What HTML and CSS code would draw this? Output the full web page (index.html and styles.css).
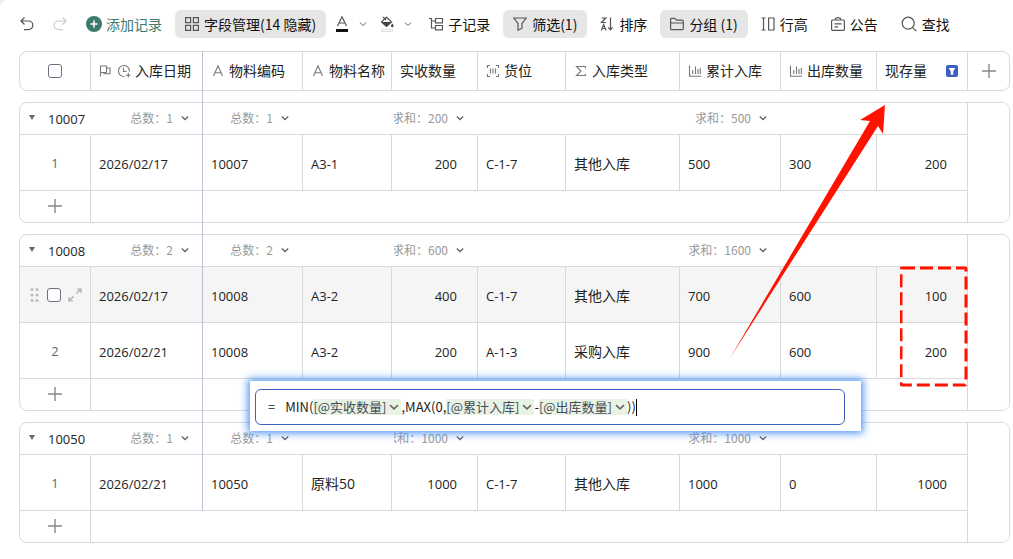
FILE: index.html
```
<!DOCTYPE html>
<html lang="zh-CN">
<head>
    <meta charset="UTF-8">
    <meta name="viewport" content="width=device-width, initial-scale=1.0">
    <title>库存现存量</title>
    <link rel="stylesheet" href="styles.css">
</head>
<body>

    <!-- Icônes partagées -->
    <svg class="sprite" aria-hidden="true">
        <symbol id="i-undo" viewBox="0 0 16 16"><path d="M5.5 1.5 2 5l3.500 3.500M2 5h7.500a4.300 4.300 0 0 1 0 8.600H5"/></symbol>
        <symbol id="i-redo" viewBox="0 0 16 16"><path d="M10.500 1.500 14 5l-3.500 3.500M14 5H6.500a4.300 4.300 0 0 0 0 8.600H11"/></symbol>
        <symbol id="i-grid" viewBox="0 0 14 14"><path d="M.6.6h5v5h-5zM8.400.6h5v5h-5zM.6 8.400h5v5h-5zM8.400 8.400h5v5h-5z"/></symbol>
        <symbol id="i-color" viewBox="0 0 14 16"><path d="M2.500 10 7 .8 11.500 10M4 7h6"/><path class="solid" d="M1 13h12v3H1z"/></symbol>
        <symbol id="i-fill" viewBox="0 0 14 16"><path d="m3 1 3 3M6.500 1.200 11.500 6 6.500 10.500 1.500 6z"/><path class="solid-grey" d="M1.500 6h10l-5 4.800zM12.300 7.500c.8 1.200 1.300 1.800 1.300 2.500a1.300 1.300 0 0 1-2.600 0c0-.7.5-1.300 1.300-2.500z"/><path class="faint" d="M1.500 13.500h11v2h-11z"/></symbol>
        <symbol id="i-down" viewBox="0 0 8 8"><path d="m.8 2.500 3.200 3 3.200-3"/></symbol>
        <symbol id="i-tree" viewBox="0 0 14 14"><path d="M0 1.500h2.500v9.500H6M2.500 4H6M6.500 1.500h7v4.300h-7zM6.500 8.500h7v4.300h-7z"/></symbol>
        <symbol id="i-funnel" viewBox="0 0 14 14"><path d="M.8 1h12.400L9 6.500v4.700l-4 2V6.500z"/></symbol>
        <symbol id="i-sort" viewBox="0 0 14 14"><path d="M1.500 1h4.300L1.500 5.500h4.500M1.300 13.500l2.400-6 2.400 6M2.200 11.500h3M10.500.5v12M8.300 10.300l2.200 2.500 2-2.500"/></symbol>
        <symbol id="i-folder" viewBox="0 0 14 14"><path d="M.6 2.400c0-.7.400-1.100 1.100-1.100h3l1.700 1.800h5.800c.7 0 1.100.4 1.100 1.100v7.300c0 .7-.4 1.100-1.100 1.100H1.700c-.7 0-1.100-.4-1.100-1.100zM.6 6h12.700"/></symbol>
        <symbol id="i-height" viewBox="0 0 14 14"><path d="M.5 1h4M2.500 1v12M.5 13h4M7.600 1h5.400v12H7.600z"/></symbol>
        <symbol id="i-notice" viewBox="0 0 14 14"><path d="M1.600 3h10.800c.6 0 1 .4 1 1v8.300c0 .6-.4 1-1 1H1.600c-.6 0-1-.4-1-1V4c0-.6.4-1 1-1zM4.500 3V1.500L7 .5l2.500 1V3M3.500 6.800h7M3.500 9.800H7"/></symbol>
        <symbol id="i-search" viewBox="0 0 16 16"><circle cx="7.200" cy="7.200" r="6"/><path d="m11.700 11.700 3.500 3.500"/></symbol>
        <symbol id="i-flag" viewBox="0 0 14 14"><path d="M1.500 12.500V2h6v6.500h-6M7.500 4H11v5.800H5V8.500"/></symbol>
        <symbol id="i-clock" viewBox="0 0 14 14"><path d="M12.400 7.500A5.500 5.500 0 1 0 7.500 12.400M6.500 3.500v4H9.500M11.300 8.800v4.800M8.900 11.200h4.800"/></symbol>
        <symbol id="i-text" viewBox="0 0 14 14"><path d="M2.500 12 7 1.800 11.500 12M4 8.700h6"/></symbol>
        <symbol id="i-scan" viewBox="0 0 14 14"><path d="M4 1.500H1.500V4M10 1.500h2.500V4M4 12.500H1.500V10M10 12.500h2.500V10M4.500 4.500v5M7 4.500v5M9.500 4.500v5"/></symbol>
        <symbol id="i-sum" viewBox="0 0 14 14"><path d="M11.500 4.300V2.500h-9L7 7l-4.500 4.500h9V9.700"/></symbol>
        <symbol id="i-chart" viewBox="0 0 14 14"><path d="M1.500 1.500v10.700h11.700M4.700 6v4M7.500 2.500V10M10 5v5M12.300 4v6"/></symbol>
        <symbol id="i-plus" viewBox="0 0 14 14"><path d="M7 0v14M0 7h14"/></symbol>
        <symbol id="i-expand" viewBox="0 0 14 14"><path d="M9 1h4v4M13 1 8.500 5.500M5 13H1V9M1 13l4.500-4.500"/></symbol>
    </svg>

    <main class="page">
        <div class="toolbar">
            <button class="tool tool-undo" type="button" aria-label="撤销"><svg class="icon icon-lg"><use href="#i-undo"/></svg></button>
            <button class="tool tool-redo" type="button" aria-label="重做" disabled><svg class="icon icon-lg"><use href="#i-redo"/></svg></button>
            <button class="tool tool-add" type="button">
                <svg class="add-icon" viewBox="0 0 16 16"><circle cx="8" cy="8" r="8"/><path d="M8 4.500v7M4.500 8h7"/></svg>添加记录
            </button>
            <button class="tool tool-on" type="button"><svg class="icon"><use href="#i-grid"/></svg>字段管理(14 隐藏)</button>
            <button class="tool tool-color" type="button" aria-label="文字颜色"><svg class="icon icon-tall"><use href="#i-color"/></svg><svg class="chevron"><use href="#i-down"/></svg></button>
            <button class="tool tool-color" type="button" aria-label="填充颜色"><svg class="icon icon-tall"><use href="#i-fill"/></svg><svg class="chevron"><use href="#i-down"/></svg></button>
            <button class="tool" type="button"><svg class="icon"><use href="#i-tree"/></svg>子记录</button>
            <button class="tool tool-on" type="button"><svg class="icon"><use href="#i-funnel"/></svg>筛选(1)</button>
            <button class="tool" type="button"><svg class="icon"><use href="#i-sort"/></svg>排序</button>
            <button class="tool tool-on" type="button"><svg class="icon"><use href="#i-folder"/></svg>分组 (1)</button>
            <button class="tool" type="button"><svg class="icon"><use href="#i-height"/></svg>行高</button>
            <button class="tool" type="button"><svg class="icon"><use href="#i-notice"/></svg>公告</button>
            <button class="tool" type="button"><svg class="icon icon-lg"><use href="#i-search"/></svg>查找</button>
        </div>

        <div class="board">
            <div class="card">
                <table class="grid">
                    <colgroup><col class="c-no"><col class="c-date"><col class="c-code"><col class="c-name"><col class="c-qty"><col class="c-loc"><col class="c-type"><col class="c-in"><col class="c-out"><col class="c-stock"><col></colgroup>
                    <thead>
                        <tr class="head">
                            <th class="no"><input class="check" type="checkbox" aria-label="全选"></th>
                            <th><span class="label"><svg class="icon"><use href="#i-flag"/></svg><svg class="icon"><use href="#i-clock"/></svg>入库日期</span></th>
                            <th><span class="label"><svg class="icon"><use href="#i-text"/></svg>物料编码</span></th>
                            <th><span class="label"><svg class="icon"><use href="#i-text"/></svg>物料名称</span></th>
                            <th><span class="label">实收数量</span></th>
                            <th><span class="label"><svg class="icon"><use href="#i-scan"/></svg>货位</span></th>
                            <th><span class="label"><svg class="icon"><use href="#i-sum"/></svg>入库类型</span></th>
                            <th><span class="label"><svg class="icon"><use href="#i-chart"/></svg>累计入库</span></th>
                            <th><span class="label"><svg class="icon"><use href="#i-chart"/></svg>出库数量</span></th>
                            <th><span class="label">现存量<button class="filter-on" type="button" aria-label="筛选"><svg viewBox="0 0 12 12"><path d="M2.500 3h7L7.300 6v3.800H4.700V6z"/></svg></button></span></th>
                            <th class="add-col"><button class="plus" type="button" aria-label="添加字段"><svg class="icon"><use href="#i-plus"/></svg></button></th>
                        </tr>
                    </thead>
                </table>
            </div>

            <div class="card">
                <table class="grid">
                    <colgroup><col class="c-no"><col class="c-date"><col class="c-code"><col class="c-name"><col class="c-qty"><col class="c-loc"><col class="c-type"><col class="c-in"><col class="c-out"><col class="c-stock"><col></colgroup>
                    <tbody>
                        <tr class="group">
                            <th colspan="2"><div class="group-title"><button class="toggle" type="button" aria-label="折叠"></button><span class="group-name">10007</span><button class="total" type="button">总数：1<svg class="chevron"><use href="#i-down"/></svg></button></div></th>
                            <td><button class="total" type="button">总数：1<svg class="chevron"><use href="#i-down"/></svg></button></td>
                            <td></td>
                            <td><button class="total" type="button">求和：200<svg class="chevron"><use href="#i-down"/></svg></button></td>
                            <td></td><td></td>
                            <td><button class="total" type="button">求和：500<svg class="chevron"><use href="#i-down"/></svg></button></td>
                            <td></td><td class="edge"></td><td class="rest"></td>
                        </tr>
                        <tr class="row">
                            <td class="no">1</td><td>2026/02/17</td><td>10007</td><td>A3-1</td><td class="num">200</td><td>C-1-7</td><td class="zh">其他入库</td><td>500</td><td>300</td><td class="num">200</td><td class="rest"></td>
                        </tr>
                        <tr class="add-row">
                            <td class="no"><button class="plus" type="button" aria-label="添加记录"><svg class="icon"><use href="#i-plus"/></svg></button></td><td colspan="9"></td><td class="rest"></td>
                        </tr>
                    </tbody>
                </table>
            </div>

            <div class="card">
                <table class="grid">
                    <colgroup><col class="c-no"><col class="c-date"><col class="c-code"><col class="c-name"><col class="c-qty"><col class="c-loc"><col class="c-type"><col class="c-in"><col class="c-out"><col class="c-stock"><col></colgroup>
                    <tbody>
                        <tr class="group">
                            <th colspan="2"><div class="group-title"><button class="toggle" type="button" aria-label="折叠"></button><span class="group-name">10008</span><button class="total" type="button">总数：2<svg class="chevron"><use href="#i-down"/></svg></button></div></th>
                            <td><button class="total" type="button">总数：2<svg class="chevron"><use href="#i-down"/></svg></button></td>
                            <td></td>
                            <td><button class="total" type="button">求和：600<svg class="chevron"><use href="#i-down"/></svg></button></td>
                            <td></td><td></td>
                            <td><button class="total" type="button">求和：1600<svg class="chevron"><use href="#i-down"/></svg></button></td>
                            <td></td><td class="edge"></td><td class="rest"></td>
                        </tr>
                        <tr class="row row-hover">
                            <td class="no">
                                <div class="handles">
                                    <svg class="drag" viewBox="0 0 10 14"><circle cx="2" cy="1.500" r="1.500"/><circle cx="7" cy="1.500" r="1.500"/><circle cx="2" cy="7" r="1.500"/><circle cx="7" cy="7" r="1.500"/><circle cx="2" cy="12.500" r="1.500"/><circle cx="7" cy="12.500" r="1.500"/></svg>
                                    <input class="check" type="checkbox" aria-label="选择记录">
                                    <button class="expand" type="button" aria-label="展开记录"><svg class="icon"><use href="#i-expand"/></svg></button>
                                </div>
                            </td>
                            <td>2026/02/17</td><td>10008</td><td>A3-2</td><td class="num">400</td><td>C-1-7</td><td class="zh">其他入库</td><td>700</td><td>600</td><td class="num">100</td><td class="rest"></td>
                        </tr>
                        <tr class="row">
                            <td class="no">2</td><td>2026/02/21</td><td>10008</td><td>A3-2</td><td class="num">200</td><td>A-1-3</td><td class="zh">采购入库</td><td>900</td><td>600</td><td class="num">200</td><td class="rest"></td>
                        </tr>
                        <tr class="add-row">
                            <td class="no"><button class="plus" type="button" aria-label="添加记录"><svg class="icon"><use href="#i-plus"/></svg></button></td><td colspan="9"></td><td class="rest"></td>
                        </tr>
                    </tbody>
                </table>
            </div>

            <div class="card">
                <table class="grid">
                    <colgroup><col class="c-no"><col class="c-date"><col class="c-code"><col class="c-name"><col class="c-qty"><col class="c-loc"><col class="c-type"><col class="c-in"><col class="c-out"><col class="c-stock"><col></colgroup>
                    <tbody>
                        <tr class="group">
                            <th colspan="2"><div class="group-title"><button class="toggle" type="button" aria-label="折叠"></button><span class="group-name">10050</span><button class="total" type="button">总数：1<svg class="chevron"><use href="#i-down"/></svg></button></div></th>
                            <td><button class="total" type="button">总数：1<svg class="chevron"><use href="#i-down"/></svg></button></td>
                            <td></td>
                            <td><button class="total" type="button">求和：1000<svg class="chevron"><use href="#i-down"/></svg></button></td>
                            <td></td><td></td>
                            <td><button class="total" type="button">求和：1000<svg class="chevron"><use href="#i-down"/></svg></button></td>
                            <td></td><td class="edge"></td><td class="rest"></td>
                        </tr>
                        <tr class="row">
                            <td class="no">1</td><td>2026/02/21</td><td>10050</td><td class="zh">原料50</td><td class="num">1000</td><td>C-1-7</td><td class="zh">其他入库</td><td>1000</td><td>0</td><td class="num">1000</td><td class="rest"></td>
                        </tr>
                        <tr class="add-row">
                            <td class="no"><button class="plus" type="button" aria-label="添加记录"><svg class="icon"><use href="#i-plus"/></svg></button></td><td colspan="9"></td><td class="rest"></td>
                        </tr>
                    </tbody>
                </table>
            </div>

            <div class="freeze-line"></div>

            <!-- Éditeur de formule -->
            <div class="formula">
                <div class="formula-box">
                    <span class="equals">=</span>
                    <div class="formula-text" role="textbox" contenteditable="true" aria-label="公式">MIN(<span class="chip">[@实收数量]<svg class="chevron"><use href="#i-down"/></svg></span>,MAX(0,<span class="chip">[@累计入库]<svg class="chevron"><use href="#i-down"/></svg></span>-<span class="chip">[@出库数量]<svg class="chevron"><use href="#i-down"/></svg></span>))<span class="caret"></span></div>
                </div>
            </div>

            <!-- Annotations rouges -->
            <svg class="arrow" viewBox="0 0 155 253"><path d="M155 0 130 15 140 16 0 253 148 21 153 29z"/></svg>
            <svg class="marker" viewBox="0 0 68 121"><rect x="1" y="2" width="65" height="117" rx="1"/></svg>
        </div>
    </main>

</body>
</html>
```

FILE: styles.css
```
* { box-sizing: border-box; }
html { background: #ededed; }
body { margin: 0; font-family: "Open Sans", "Noto Sans CJK SC", sans-serif; font-size: 14px; line-height: 20px; color: #222; }
button { margin: 0; padding: 0; border: none; background: none; font: inherit; color: inherit; cursor: pointer; }
svg { display: block; flex: none; }

.sprite { position: absolute; width: 0; height: 0; }
.page { min-height: 100vh; padding: 10px 3px 16px 19px; background: #fff; border-top-left-radius: 8px; }

.icon { width: 14px; height: 14px; fill: none; stroke: #555; stroke-width: 1.2; }
.icon-lg { width: 16px; height: 16px; }
.icon-tall { height: 16px; }
.solid { fill: #111; stroke: none; }
.solid-grey { fill: #444; stroke: none; }
.faint { stroke: #ddd; stroke-width: 1; }
.chevron { width: 8px; height: 8px; fill: none; stroke: #666; stroke-width: 1.4; }

/* Barre d'outils */
.toolbar { display: flex; align-items: center; gap: 3px; height: 28px; margin-bottom: 13px; white-space: nowrap; }
.tool { display: flex; align-items: center; gap: 5px; height: 28px; padding: 0 10px; border-radius: 6px; font-family: "Noto Sans CJK SC", sans-serif; color: #111; }
.tool-on { background: #e6e6e6; }
.tool-undo { padding: 0 8px 0 0; }
.tool-redo { padding: 0 5px 0 6px; opacity: 0.3; }
.tool-add { gap: 4px; color: #3d7a6c; }
.tool-color { gap: 10px; padding: 0 4px 0 6px; }
.tool-color .chevron { stroke-width: 1; }
.add-icon { width: 16px; height: 16px; fill: #3d7a6c; }
.add-icon path { stroke: #fff; stroke-width: 1.6; }

/* Tableau */
.board { position: relative; display: flex; flex-direction: column; gap: 11px; }
.card { border: 1px solid #d9d9d9; border-radius: 8px; overflow: hidden; }
.grid { width: 100%; table-layout: fixed; border-collapse: separate; border-spacing: 0; }
.grid th, .grid td { padding: 0; font-weight: normal; text-align: left; white-space: nowrap; }

.c-no { width: 71px; }
.c-date { width: 112px; }
.c-code { width: 100px; }
.c-name { width: 89px; }
.c-qty { width: 86px; }
.c-loc { width: 88px; }
.c-type { width: 114px; }
.c-in { width: 101px; }
.c-out { width: 96px; }
.c-stock { width: 91px; }

.grid .head th { height: 38px; padding-left: 8px; border-right: 1px solid #d9d9d9; }
.grid .head .no, .grid .head .add-col { padding: 0; text-align: center; }
.grid .head .add-col { border-right: none; }
.label { display: flex; align-items: center; gap: 4px; }
.label .icon { stroke: #777; stroke-width: 1.1; }
.filter-on { width: 12px; height: 12px; margin-left: auto; margin-right: 9px; border-radius: 2px; background: #3f60bf; }
.filter-on svg { width: 12px; height: 12px; fill: #fff; }
.check { display: block; appearance: none; width: 14px; height: 14px; margin: 0 auto; border: 1px solid #6b7080; border-radius: 3px; background: #fff; }
.plus { display: block; margin: 0 auto; }
.plus .icon { stroke: #888; stroke-width: 1.4; }

.grid .group th, .grid .group td { height: 32px; padding-bottom: 2px; border-bottom: 1px solid #d9d9d9; overflow: hidden; }
.grid .group td { padding-left: 2px; padding-right: 14px; }
.grid .group .edge { border-right: 1px solid #d9d9d9; }
.group-title { display: flex; align-items: center; padding: 0 14px 0 9px; }
.toggle { border: 3px solid transparent; border-top: 5px solid #666; border-bottom: none; }
.group-name { margin-left: 13px; padding-top: 3px; font-size: 13px; }
.total { display: flex; align-items: center; justify-content: flex-end; gap: 8px; width: 100%; overflow: hidden; font-family: "Noto Sans CJK SC", sans-serif; font-size: 12px; color: #999; }
.group-title .total { width: auto; margin-left: auto; }

.grid .row td { height: 56px; padding: 3px 0 0 8px; border-right: 1px solid #d9d9d9; border-bottom: 1px solid #d9d9d9; font-size: 13px; }
.grid .row .zh { font-size: 14px; }
.grid .row .num { padding-right: 20px; text-align: right; }
.grid .row .no { padding: 0; text-align: center; color: #666; }
.row-hover td { background: #f5f5f5; }
.handles { display: flex; align-items: center; gap: 7px; padding-left: 10px; }
.handles .check { margin: 0; }
.drag { width: 10px; height: 14px; fill: #bbb; }
.expand .icon { stroke: #aaa; }
.grid .add-row td { height: 31px; padding-bottom: 2px; border-right: 1px solid #d9d9d9; }
.grid .row .rest, .grid .group .rest, .grid .add-row .rest { border: none; background: #fff; }

.freeze-line { position: absolute; top: 0; bottom: 32px; left: 183px; width: 1px; background: #bfbfd4; }

/* Formule */
.formula { position: absolute; top: 330px; left: 231px; width: 611px; padding: 8px 16px 6px 5px; background: #fff; box-shadow: 0 0 8px 2px #4a90f5; }
.formula-box { display: flex; align-items: center; gap: 10px; height: 36px; padding: 0 12px; border: 1px solid #3f62c0; border-radius: 6px; font-family: "Noto Sans CJK SC", sans-serif; font-size: 13px; }
.formula-text { display: flex; align-items: center; outline: none; white-space: nowrap; }
.chip { display: flex; align-items: center; gap: 3px; height: 16px; padding-right: 2px; background: #e9f3e3; color: #444b5a; }
.chip .chevron { width: 10px; height: 10px; stroke-width: 1.2; }
.caret { width: 1px; height: 17px; background: #000; }

.arrow { position: absolute; top: 54px; left: 711px; width: 155px; height: 253px; fill: #ff1300; pointer-events: none; }
.marker { position: absolute; top: 215px; left: 881px; width: 68px; height: 121px; fill: none; stroke: #ff1300; stroke-width: 3; stroke-dasharray: 13 5; pointer-events: none; }
```
